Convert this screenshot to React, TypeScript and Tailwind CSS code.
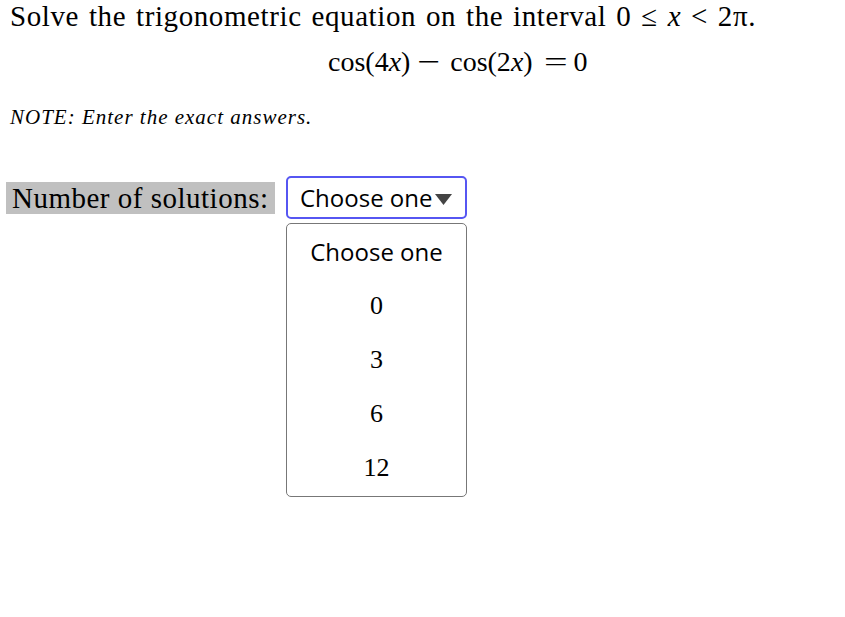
export default function App() {
  const options = ["0", "3", "6", "12"];
  return (
    <div className="min-h-screen bg-white text-black" style={{ fontFamily: '"Liberation Serif", serif' }}>
      <div className="px-[10px]">
        <p className="text-[29px] leading-[32px] tracking-[0.6px] [word-spacing:2px]">
          Solve the trigonometric equation on the interval 0 ≤ <i>x</i> &lt; 2π.
        </p>
        <div className="mt-[16px] flex items-baseline pl-[318px] text-[28px] leading-[28px]">
          <span>
            cos(4<i>x</i>)
          </span>
          <span className="ml-[11px] mr-[13px] inline-block scale-x-[1.45]">−</span>
          <span>
            cos(2<i>x</i>)
          </span>
          <span className="ml-[15px] mr-[10px] inline-block scale-x-[1.5]">=</span>
          <span>0</span>
        </div>
        <p className="mt-[29px] text-[21px] italic leading-[24px] tracking-[1px]">
          NOTE: Enter the exact answers.
        </p>
      </div>

      <div className="mt-[47px] flex items-start pl-[6px]">
        <span className="mt-[6px] w-[269px] bg-[#c0c0c0] pl-[6px] text-[29px] leading-[32px] tracking-[0.5px]">
          Number of solutions:
        </span>
        <div className="ml-[11px] flex w-[181px] flex-col">
          <div
            className="flex h-[43px] items-center rounded-[5px] border-2 border-[#5656f2] pl-[12px] text-[24px]"
            style={{ fontFamily: '"Open Sans", sans-serif' }}
          >
            Choose one
            <svg width="17" height="11" viewBox="0 0 17 11" className="ml-[2px] mt-[3px]">
              <path d="M0 0 H17 L8.5 11 Z" fill="#444" />
            </svg>
          </div>
          <div className="mt-[4px] flex flex-col items-center rounded-[5px] border border-[#777] py-[1px]">
            <div
              className="h-[54px] text-[24px] leading-[54px]"
              style={{ fontFamily: '"Open Sans", sans-serif' }}
            >
              Choose one
            </div>
            {options.map((o) => (
              <div key={o} className="h-[54px] text-[26px] leading-[54px]">
                {o}
              </div>
            ))}
          </div>
        </div>
      </div>
    </div>
  );
}
